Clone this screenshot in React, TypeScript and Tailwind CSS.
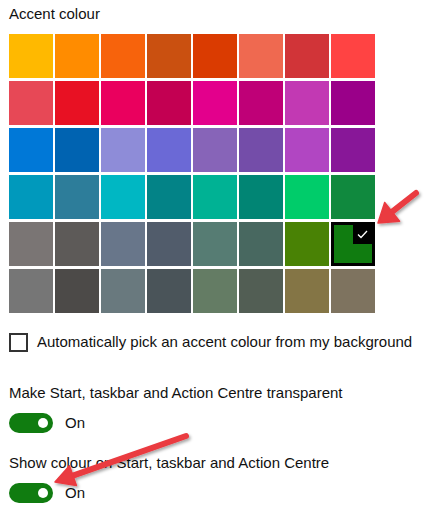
import React from "react";

const rows: string[][] = [
  ["#FFB900", "#FF8C00", "#F7630C", "#CA5010", "#DA3B01", "#EF6950", "#D13438", "#FF4343"],
  ["#E74856", "#E81123", "#EA005E", "#C30052", "#E3008C", "#BF0077", "#C239B3", "#9A0089"],
  ["#0078D7", "#0063B1", "#8E8CD8", "#6B69D6", "#8764B8", "#744DA9", "#B146C2", "#881798"],
  ["#0099BC", "#2D7D9A", "#00B7C3", "#038387", "#00B294", "#018574", "#00CC6A", "#10893E"],
  ["#7A7574", "#5D5A58", "#68768A", "#515C6B", "#567C73", "#486860", "#498205", "#107C10"],
  ["#767676", "#4C4A48", "#69797E", "#4A5459", "#647C64", "#525E54", "#847545", "#7E735F"],
];

function Toggle() {
  return (
    <div className="flex items-center gap-[12px]">
      <div className="w-[44px] h-[20px] rounded-full bg-[#107c10] flex items-center justify-end pr-[5px]">
        <div className="w-[10px] h-[10px] rounded-full bg-white" />
      </div>
      <span className="text-[15px] leading-[20px] text-[#111]">On</span>
    </div>
  );
}

function Arrow({ tip, tail, headLen, headHalf }: { tip: [number, number]; tail: [number, number]; headLen: number; headHalf: number }) {
  const dx = tail[0] - tip[0];
  const dy = tail[1] - tip[1];
  const len = Math.hypot(dx, dy);
  const ux = dx / len;
  const uy = dy / len;
  const px = -uy;
  const py = ux;
  const bx = tip[0] + ux * headLen;
  const by = tip[1] + uy * headLen;
  const w1 = [bx + px * headHalf, by + py * headHalf];
  const w2 = [bx - px * headHalf, by - py * headHalf];
  const sx = tip[0] + ux * (headLen - 3);
  const sy = tip[1] + uy * (headLen - 3);
  return (
    <g filter="url(#sh)">
      <line x1={sx} y1={sy} x2={tail[0]} y2={tail[1]} stroke="#ea3a40" strokeWidth={6} strokeLinecap="round" />
      <polygon points={`${tip[0]},${tip[1]} ${w1[0]},${w1[1]} ${w2[0]},${w2[1]}`} fill="#ea3a40" stroke="#ea3a40" strokeWidth={1.5} strokeLinejoin="round" />
    </g>
  );
}

export default function App() {
  return (
    <div
      className="relative w-[430px] h-[514px] bg-white pl-[9px] pt-[4px] text-[#111] whitespace-nowrap"
      style={{ fontFamily: '"Liberation Sans", Arial, sans-serif' }}
    >
      <div className="text-[15px] leading-[20px]">Accent colour</div>
      <div className="mt-[10px] grid grid-cols-[repeat(8,44px)] auto-rows-[44px] gap-x-[2px] gap-y-[3px]">
        {rows.map((r, ri) =>
          r.map((c, ci) => {
            const sel = ri === 4 && ci === 7;
            if (sel) {
              return (
                <div key={`${ri}-${ci}`} className="relative border-[3px] border-black" style={{ backgroundColor: c }}>
                  <div className="absolute top-0 right-0 w-[19px] h-[19px] bg-black flex items-center justify-center">
                    <svg width="11" height="9" viewBox="0 0 11 9">
                      <path d="M1 4.5 L4 7.5 L10 1" stroke="white" strokeWidth="1.3" fill="none" />
                    </svg>
                  </div>
                </div>
              );
            }
            return <div key={`${ri}-${ci}`} style={{ backgroundColor: c }} />;
          })
        )}
      </div>
      <div className="mt-[19px] flex items-center gap-[9px]">
        <div className="w-[19px] h-[19px] border-2 border-[#333]" />
        <span className="text-[15px] leading-[20px]">Automatically pick an accent colour from my background</span>
      </div>
      <div className="mt-[31px] text-[15px] leading-[20px]">Make Start, taskbar and Action Centre transparent</div>
      <div className="mt-[10px]">
        <Toggle />
      </div>
      <div className="mt-[20px] text-[15px] leading-[20px]">Show colour on Start, taskbar and Action Centre</div>
      <div className="mt-[10px]">
        <Toggle />
      </div>
      <svg className="absolute inset-0 pointer-events-none" width="430" height="514">
        <defs>
          <filter id="sh" x="-20%" y="-20%" width="140%" height="140%">
            <feDropShadow dx="1.5" dy="2" stdDeviation="1.5" floodColor="#000" floodOpacity="0.35" />
          </filter>
        </defs>
        <Arrow tip={[378, 223]} tail={[416, 193]} headLen={18} headHalf={12} />
        <Arrow tip={[55, 482]} tail={[186, 436]} headLen={19} headHalf={10.5} />
      </svg>
    </div>
  );
}
